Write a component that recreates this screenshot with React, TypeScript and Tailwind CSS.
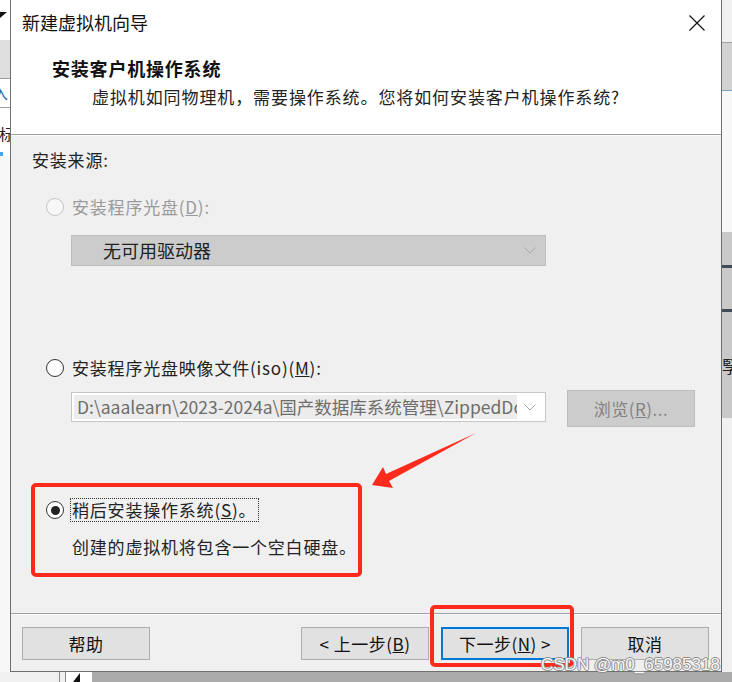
import React from "react";

const FONT = { fontFamily: '"Noto Sans CJK SC", "Noto Sans", sans-serif' };

function Radio({ checked, disabled }: { checked?: boolean; disabled?: boolean }) {
  return (
    <span
      className={
        "w-[18px] h-[18px] rounded-full border flex items-center justify-center shrink-0 " +
        (disabled ? "border-[#c4c4c4] bg-[#f7f7f7]" : "border-[#333333] bg-white")
      }
    >
      {checked && <span className="w-[9px] h-[9px] rounded-full bg-[#222222]" />}
    </span>
  );
}

function Chevron() {
  return (
    <svg width="12" height="7" viewBox="0 0 12 7" className="shrink-0">
      <polyline points="0.5,0.5 6,6 11.5,0.5" fill="none" stroke="#a8a8a8" strokeWidth="1" />
    </svg>
  );
}

function Btn({ children, primary }: { children: React.ReactNode; primary?: boolean }) {
  return (
    <div
      className={
        "w-[128px] h-[33px] flex items-center justify-center bg-[#e1e1e1] text-[17px] tracking-[0.5px] text-[#111] " +
        (primary ? "border-2 border-[#0078d7]" : "border border-[#adadad]")
      }
    >
      {children}
    </div>
  );
}

export default function App() {
  return (
    <div className="relative w-[732px] h-[682px] overflow-hidden bg-[#f0f0f0]" style={FONT}>
      <div className="grid grid-cols-[10px_712px_10px] grid-rows-[672px_10px]">
        {/* left background strip */}
        <div className="flex flex-col overflow-hidden bg-white">
          <div className="h-[40px] bg-white relative">
            <svg width="8" height="8" viewBox="0 0 8 8" className="mt-[12px]">
              <polygon points="0,0 7,0 0,6" fill="#111" />
            </svg>
          </div>
          <div className="h-[38px] bg-[#dedede]" />
          <div className="h-[1px] bg-[#a0a0a0]" />
          <div className="h-[28px] bg-white flex items-center overflow-hidden">
            <span className="text-[15px] text-[#2a6bb0] ml-[-7px]">入</span>
          </div>
          <div className="h-[1px] bg-[#a0a0a0]" />
          <div className="h-[36px] bg-white flex items-end overflow-hidden">
            <span className="text-[15px] text-[#222] ml-[-1px] leading-[20px]">标</span>
          </div>
          <div className="h-[4px] w-[3px] bg-[#41a5f5] mt-[8px]" />
          <div className="flex-1 bg-[#f7f7f7]" />
        </div>

        {/* dialog */}
        <div className="flex flex-col border-x border-b border-[#6f6f6f] bg-[#f0f0f0]">
          {/* header */}
          <div className="h-[134px] bg-white flex flex-col">
            <div className="h-[45px] flex items-center justify-between pl-[11px] pr-[16px]">
              <span className="text-[18px] text-[#111]">新建虚拟机向导</span>
              <svg width="16" height="16" viewBox="0 0 16 16" className="mt-[1px]">
                <path d="M0.5 0.5 L15.5 15.5 M15.5 0.5 L0.5 15.5" stroke="#111" strokeWidth="1.2" />
              </svg>
            </div>
            <div className="h-[24px] mt-[11px] pl-[41px] flex items-center">
              <span className="text-[18px] font-bold text-[#111] tracking-[0.8px]">安装客户机操作系统</span>
            </div>
            <div className="h-[24px] mt-[5px] pl-[81px] flex items-center">
              <span className="text-[17px] tracking-[0.9px] text-[#222]">
                虚拟机如同物理机，需要操作系统。您将如何安装客户机操作系统?
              </span>
            </div>
          </div>
          <div className="h-[1px] bg-[#a0a0a0]" />
          <div className="h-[1px] bg-white" />

          {/* body */}
          <div className="flex-1 flex flex-col text-[17px] tracking-[0.8px] text-[#222]">
            <div className="h-[24px] mt-[12px] pl-[21px] flex items-center">安装来源:</div>

            <div className="h-[24px] mt-[23px] pl-[35px] flex items-center gap-[6px]">
              <Radio disabled />
              <span className="pl-[2px] text-[#9a9a9a]">
                安装程序光盘(<span className="underline">D</span>):
              </span>
            </div>

            <div className="mt-[16px] ml-[60px] w-[475px] h-[31px] bg-[#cccccc] border border-[#bdbdbd] flex items-center justify-between pl-[31px] pr-[9px]">
              <span className="text-[18px] tracking-[0px] text-[#222]">无可用驱动器</span>
              <Chevron />
            </div>

            <div className="h-[24px] mt-[90px] pl-[35px] flex items-center gap-[6px]">
              <Radio />
              <span className="pl-[2px]">
                安装程序光盘映像文件(iso)(<span className="underline">M</span>):
              </span>
            </div>

            <div className="mt-[10px] ml-[60px] flex items-start gap-[21px]">
              <div className="mt-[2px] w-[475px] h-[30px] bg-white border border-[#c6c6c6] flex items-center pl-[2px] pr-[9px]">
                <div className="w-[443px] h-[24px] bg-[#ececec] overflow-hidden whitespace-nowrap flex items-center pl-[3px]">
                  <span className="text-[17.5px] tracking-[0px] text-[#6d6d6d]">D:\aaalearn\2023-2024a\国产数据库系统管理\ZippedDc</span>
                </div>
                <div className="flex-1 flex justify-end">
                  <Chevron />
                </div>
              </div>
              <div className="w-[128px] h-[37px] bg-[#cccccc] border border-[#bdbdbd] flex items-center justify-center text-[17px] tracking-[0.5px] text-[#838383]">
                浏览(<span className="underline">R</span>)...
              </div>
            </div>

            <div className="h-[24px] mt-[71px] pl-[35px] flex items-center gap-[6px]">
              <Radio checked />
              <span className="h-[24px] flex items-center border border-dotted border-[#333] pl-[1px] pr-[2px]">
                稍后安装操作系统(<span className="underline">S</span>)。
              </span>
            </div>

            <div className="h-[24px] mt-[13px] pl-[61px] flex items-center">创建的虚拟机将包含一个空白硬盘。</div>
          </div>

          {/* footer */}
          <div className="h-[1px] bg-[#a0a0a0]" />
          <div className="h-[1px] bg-white" />
          <div className="h-[56px] flex items-start justify-between pt-[12px] pl-[11px] pr-[12px]">
            <Btn>帮助</Btn>
            <div className="flex gap-[12px]">
              <Btn>
                &lt; 上一步(<span className="underline">B</span>)
              </Btn>
              <Btn primary>
                下一步(<span className="underline">N</span>) &gt;
              </Btn>
              <Btn>取消</Btn>
            </div>
          </div>
        </div>

        {/* right background strip */}
        <div className="flex flex-col overflow-hidden">
          <div className="h-[42px] bg-[#f0f0f0]" />
          <div className="h-[1px] bg-[#a0a0a0]" />
          <div className="h-[47px] bg-[#d2d2d2]" />
          <div className="h-[1px] bg-[#7aa3c4]" />
          <div className="h-[141px] bg-[#f7f7f7]" />
          <div className="h-[186px] bg-[#c9c9c9] flex flex-col">
            <div className="h-[3px] mt-[33px] bg-[#3f4b57]" />
            <div className="h-[3px] mt-[41px] bg-[#3f4b57]" />
            <div className="mt-[44px] flex overflow-hidden">
              <span className="text-[17px] text-[#222] leading-[20px]">孯</span>
            </div>
          </div>
          <div className="flex-1 bg-[#f0f0f0]" />
        </div>

        {/* bottom background strip */}
        <div className="col-span-3 flex">
          <div className="w-[59px] bg-[#f0f0f0]" />
          <div className="w-[1px] bg-[#8a8a8a]" />
          <div className="w-[5px] bg-[#f0f0f0]" />
          <div className="w-[1px] bg-[#8a8a8a]" />
          <div className="w-[26px] bg-white flex items-start pl-[7px]">
            <svg width="8" height="10" viewBox="0 0 8 10">
              <polygon points="7,1 7,10 0,10" fill="#111" />
            </svg>
          </div>
          <div className="flex-1 bg-[#ababab]" />
        </div>
      </div>

      {/* annotations */}
      <div className="absolute left-[31px] top-[483px] w-[331px] h-[94px] border-[4px] border-[#fe2a1c] rounded-[5px] pointer-events-none" />
      <div className="absolute left-[430px] top-[605px] w-[144px] h-[62px] border-[4px] border-[#fe2a1c] rounded-[5px] pointer-events-none" />
      <svg className="absolute left-0 top-0 pointer-events-none" width="732" height="682" viewBox="0 0 732 682">
        <polygon points="372,485 383,467 386,474 476,433 389,481 393,488" fill="#fe2a1c" />
      </svg>
      <div
        className="absolute left-[541px] top-[655px] text-[17px] leading-[20px] text-[#f8f8f8] whitespace-nowrap [text-shadow:1px_0_0_#8c8c8c,-1px_0_0_#8c8c8c,0_1px_0_#8c8c8c,0_-1px_0_#8c8c8c]"
        style={{ fontFamily: '"Liberation Sans", Arial, sans-serif' }}
      >
        CSDN @m0_65985318
      </div>
    </div>
  );
}
